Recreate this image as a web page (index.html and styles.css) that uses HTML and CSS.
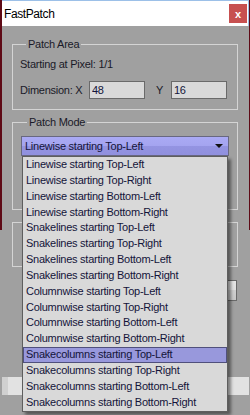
FILE: index.html
```html
<!DOCTYPE html>
<html lang="en">
<head>
  <meta charset="UTF-8" />
  <title>FastPatch</title>
  <link rel="stylesheet" href="styles.css">
</head>
<body>

  <div class="window">
    <div class="titlebar">
      <span class="title">FastPatch</span>
      <div class="close">x</div>
    </div>

    <div class="group area">
      <span class="group-title">Patch Area</span>
      <div class="line">Starting at Pixel: 1/1</div>
      <div class="dim-row">
        <span class="dim-label">Dimension: X</span>
        <input type="text" class="field" value="48" />
        <span class="y-label">Y</span>
        <input type="text" class="field" value="16" />
      </div>
    </div>

    <div class="group mode">
      <span class="group-title">Patch Mode</span>
      <div class="combo">
        <span>Linewise starting Top-Left</span>
        <span class="arrow"></span>
      </div>
    </div>

    <div class="group options"></div>

    <div class="hidden-btn"></div>

    <div class="strip"></div>

    <!-- open dropdown list of the combo -->
    <div class="dropdown">
      <div class="option">Linewise starting Top-Left</div>
      <div class="option">Linewise starting Top-Right</div>
      <div class="option">Linewise starting Bottom-Left</div>
      <div class="option">Linewise starting Bottom-Right</div>
      <div class="option">Snakelines starting Top-Left</div>
      <div class="option">Snakelines starting Top-Right</div>
      <div class="option">Snakelines starting Bottom-Left</div>
      <div class="option">Snakelines starting Bottom-Right</div>
      <div class="option">Columnwise starting Top-Left</div>
      <div class="option">Columnwise starting Top-Right</div>
      <div class="option">Columnwise starting Bottom-Left</div>
      <div class="option">Columnwise starting Bottom-Right</div>
      <div class="option selected">Snakecolumns starting Top-Left</div>
      <div class="option">Snakecolumns starting Top-Right</div>
      <div class="option">Snakecolumns starting Bottom-Left</div>
      <div class="option">Snakecolumns starting Bottom-Right</div>
    </div>
  </div>

</body>
</html>
```

FILE: styles.css
```css
body {
  margin: 0;
  background: linear-gradient(#5e0a16 0, #5e0a16 230px, #a0a0a0 230px);
  font-family: 'Liberation Sans', Arial, sans-serif;
  font-size: 11px;
  letter-spacing: -0.25px;
  color: #1a1a28;
}

.window {
  position: relative;
  margin-left: 2px;
  width: 247px;
  height: 415px;
  background-color: #a0a0a0;
  overflow: hidden;
}

.titlebar {
  position: relative;
  height: 25px;
  display: flex;
  align-items: center;
  padding-left: 2px;
  background-color: #ffffff;
  border-top: 1px solid #9cc0e8;
  border-right: 1px solid #9cc0e8;
  font-size: 12px;
  letter-spacing: -0.4px;
  color: #000;
}

.close {
  position: absolute;
  right: 1px;
  top: 3px;
  width: 18px;
  height: 19px;
  display: flex;
  align-items: center;
  justify-content: center;
  background-color: #c75050;
  color: #fff;
  font-weight: bold;
  font-size: 11px;
  letter-spacing: 0;
}

.group {
  margin: 12px 11px 0 10px;
  border: 1px solid #d4d4d4;
}

.group-title {
  display: table;
  margin: -8px 0 0 6px;
  padding: 0 2px;
  line-height: 14px;
  background-color: #a0a0a0;
}

.area {
  margin-top: 18px;
  padding: 0 0 10px 7px;
}

.line {
  margin-top: 6px;
  line-height: 14px;
}

.dim-row {
  margin-top: 10px;
  display: flex;
  align-items: center;
}

.dim-label {
  width: 69px;
}

.y-label {
  width: 15px;
  padding-left: 11px;
}

.field {
  box-sizing: border-box;
  width: 56px;
  height: 18px;
  margin: 0;
  padding: 0 0 0 2px;
  border: 1px solid #6a6a6a;
  background-color: #d9d9d9;
  font-family: inherit;
  font-size: 11px;
  letter-spacing: -0.25px;
  color: #14143a;
}

.mode {
  padding: 0 8px 53px 8px;
}

.combo {
  box-sizing: border-box;
  margin-top: 7px;
  height: 20px;
  display: flex;
  align-items: center;
  justify-content: space-between;
  padding: 0 5px 0 3px;
  border: 1px solid #686880;
  background: linear-gradient(#aaaaf4 0, #a4a4f0 50%, #9494e2 50%, #9090de 100%);
  color: #14143a;
}

.arrow {
  width: 0;
  height: 0;
  border-left: 4px solid transparent;
  border-right: 4px solid transparent;
  border-top: 4px solid #111;
}

.options {
  height: 43px;
}

.hidden-btn {
  box-sizing: border-box;
  margin: 13px 12px 0 120px;
  height: 21px;
  border: 1px solid #6a6a6a;
  background: linear-gradient(#e6e6e6, #e0e0e0 50%, #cfcfcf 50%, #c8c8c8);
}

.strip {
  margin-top: 76px;
  height: 18px;
  background: linear-gradient(to right, #d0d0d0 0, #d0d0d0 6px, #e2e2e2 6px);
}

.dropdown {
  position: absolute;
  top: 156px;
  left: 20px;
  width: 204px;
  border: 1px solid #5e5e5e;
  background-color: #d9d9d9;
  box-shadow: 3px 3px 3px rgba(0, 0, 0, 0.45);
}

.option {
  line-height: 15.85px;
  padding-left: 3px;
  color: #14143a;
  white-space: nowrap;
}

.option.selected {
  background-color: #9898dc;
  box-shadow: inset 0 0 0 1px #50507c;
}
```
